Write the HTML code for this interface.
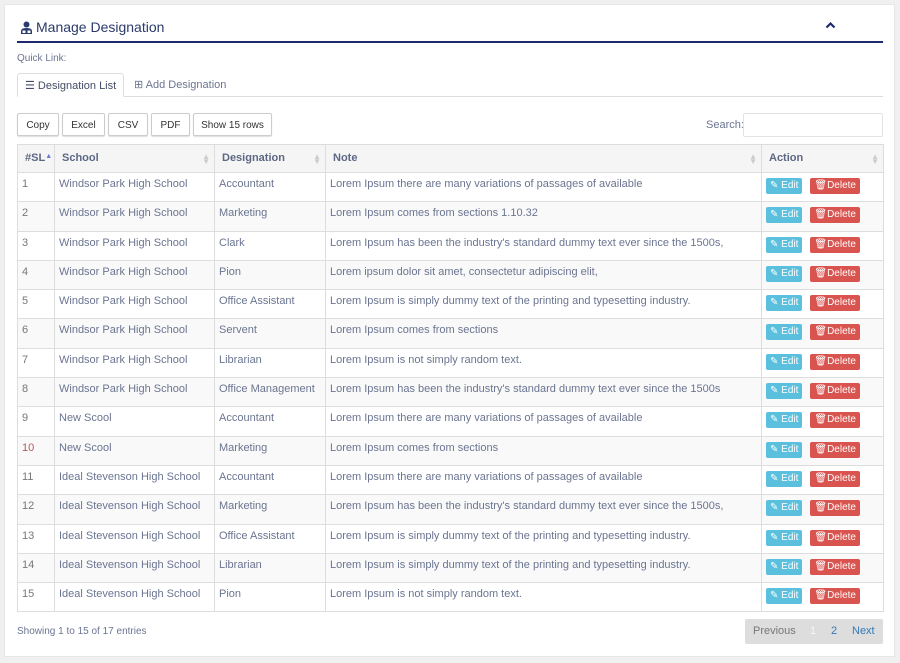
<!DOCTYPE html>
<html><head><style>
*{box-sizing:border-box;margin:0;padding:0}
body{width:900px;height:663px;background:#f0f0f0;font-family:"Liberation Sans",sans-serif;font-size:11px;color:#6b7591;position:relative;overflow:hidden}
.panel{position:absolute;left:4px;top:4px;width:891px;height:653px;background:#fff;border:1px solid #e6e6e6}
.title{position:absolute;left:20px;top:19px;font-size:14px;color:#2b3a6b}
.title svg{vertical-align:-2px;margin-right:3px}
.chev{position:absolute;left:825px;top:21px}
.line{position:absolute;left:17px;top:41px;width:866px;height:2px;background:#1f2a6e}
.ql{position:absolute;left:17px;top:53px;font-size:10px}
.tabs{position:absolute;left:17px;top:73px;width:866px;height:24px;border-bottom:1px solid #ddd}
.tab{position:absolute;top:0;height:24px;line-height:24px;padding:0 7px;font-size:11px}
.tab.a{left:0;border:1px solid #ddd;border-bottom:1px solid #fff;background:#fff;border-radius:3px 3px 0 0;color:#444c66}
.btn{position:absolute;top:113px;height:23px;border:1px solid #ccc;border-radius:2px;background:#fff;font-size:10px;color:#333;text-align:center;line-height:23px;box-shadow:0 1px 1px #ddd}
.search{position:absolute;left:706px;top:119px;font-size:11px}
.sbox{position:absolute;left:743px;top:113px;width:140px;height:24px;border:1px solid #e3e3e3;border-radius:2px}
table{position:absolute;left:17px;top:144px;width:866px;border-collapse:collapse;table-layout:fixed}
td,th{border:1px solid #ddd;text-align:left;vertical-align:top;padding:5px 4px 0 4px;height:29.3px;font-weight:normal}
td:first-child{color:#777}
th{height:28px;font-weight:bold;background:#f5f5f5;color:#5e6885;padding:7px 7px 0;position:relative}
tr:nth-child(odd) td{background:#f9f9f9}
tr:nth-child(even) td{background:#fff}
.s{position:absolute;right:4px;top:9px;color:#ccc;font-size:8px;line-height:5px}
.e,.d{display:inline-block;height:16px;line-height:16px;color:#fff;border-radius:2px;font-size:10px;padding:0 4px;margin-top:0}
.e{background:#5bc0de}.d{background:#d9534f;margin-left:8px}
.info{position:absolute;left:17px;top:626px;font-size:10px}
.pag{position:absolute;left:745px;top:619px;width:138px;height:25px;background:#ddd;border-radius:2px;font-size:11px;line-height:25px}
.pag span{position:absolute}
</style></head><body>
<div class="panel"></div>
<div class="title"><svg width="13" height="13" viewBox="0 0 13 13"><circle cx="6.5" cy="3.5" r="3" fill="#2b3a6b"/><path d="M1 13V10Q1 7 6.5 7Q12 7 12 10V13Z" fill="#2b3a6b"/><rect x="2.5" y="9.5" width="3" height="2.5" fill="#fff"/><rect x="7.5" y="9.5" width="3" height="2.5" fill="#fff"/></svg>Manage Designation</div>
<svg class="chev" width="11" height="8" viewBox="0 0 11 8"><path d="M1.5 6.5L5.5 2.5L9.5 6.5" stroke="#1f2a6e" stroke-width="2.2" fill="none"/></svg>
<div class="line"></div>
<div class="ql">Quick Link:</div>
<div class="tabs"><div class="tab a">&#9776; Designation List</div><div class="tab" style="left:110px">&#8862; Add Designation</div></div>
<div class="btn" style="left:17px;width:42px">Copy</div>
<div class="btn" style="left:62px;width:43px">Excel</div>
<div class="btn" style="left:108px;width:40px">CSV</div>
<div class="btn" style="left:151px;width:39px">PDF</div>
<div class="btn" style="left:193px;width:79px">Show 15 rows</div>
<div class="search">Search:</div><div class="sbox"></div>
<table>
<colgroup><col style="width:37px"><col style="width:160px"><col style="width:111px"><col style="width:436px"><col style="width:122px"></colgroup>
<tr><th>#SL<span style="font-size:7px;color:#6b7ad0;vertical-align:3px">&#9650;</span></th><th>School<span class="s">&#9650;<br>&#9660;</span></th><th>Designation<span class="s">&#9650;<br>&#9660;</span></th><th>Note<span class="s">&#9650;<br>&#9660;</span></th><th>Action<span class="s">&#9650;<br>&#9660;</span></th></tr>
<tr><td>1</td><td>Windsor Park High School</td><td>Accountant</td><td>Lorem Ipsum there are many variations of passages of available</td><td><span class="e">&#9998; Edit</span><span class="d">&#128465;Delete</span></td></tr>
<tr><td>2</td><td>Windsor Park High School</td><td>Marketing</td><td>Lorem Ipsum comes from sections 1.10.32</td><td><span class="e">&#9998; Edit</span><span class="d">&#128465;Delete</span></td></tr>
<tr><td>3</td><td>Windsor Park High School</td><td>Clark</td><td>Lorem Ipsum has been the industry's standard dummy text ever since the 1500s,</td><td><span class="e">&#9998; Edit</span><span class="d">&#128465;Delete</span></td></tr>
<tr><td>4</td><td>Windsor Park High School</td><td>Pion</td><td>Lorem ipsum dolor sit amet, consectetur adipiscing elit,</td><td><span class="e">&#9998; Edit</span><span class="d">&#128465;Delete</span></td></tr>
<tr><td>5</td><td>Windsor Park High School</td><td>Office Assistant</td><td>Lorem Ipsum is simply dummy text of the printing and typesetting industry.</td><td><span class="e">&#9998; Edit</span><span class="d">&#128465;Delete</span></td></tr>
<tr><td>6</td><td>Windsor Park High School</td><td>Servent</td><td>Lorem Ipsum comes from sections</td><td><span class="e">&#9998; Edit</span><span class="d">&#128465;Delete</span></td></tr>
<tr><td>7</td><td>Windsor Park High School</td><td>Librarian</td><td>Lorem Ipsum is not simply random text.</td><td><span class="e">&#9998; Edit</span><span class="d">&#128465;Delete</span></td></tr>
<tr><td>8</td><td>Windsor Park High School</td><td>Office Management</td><td>Lorem Ipsum has been the industry's standard dummy text ever since the 1500s</td><td><span class="e">&#9998; Edit</span><span class="d">&#128465;Delete</span></td></tr>
<tr><td>9</td><td>New Scool</td><td>Accountant</td><td>Lorem Ipsum there are many variations of passages of available</td><td><span class="e">&#9998; Edit</span><span class="d">&#128465;Delete</span></td></tr>
<tr><td style="color:#b5585a">10</td><td>New Scool</td><td>Marketing</td><td>Lorem Ipsum comes from sections</td><td><span class="e">&#9998; Edit</span><span class="d">&#128465;Delete</span></td></tr>
<tr><td>11</td><td>Ideal Stevenson High School</td><td>Accountant</td><td>Lorem Ipsum there are many variations of passages of available</td><td><span class="e">&#9998; Edit</span><span class="d">&#128465;Delete</span></td></tr>
<tr><td>12</td><td>Ideal Stevenson High School</td><td>Marketing</td><td>Lorem Ipsum has been the industry's standard dummy text ever since the 1500s,</td><td><span class="e">&#9998; Edit</span><span class="d">&#128465;Delete</span></td></tr>
<tr><td>13</td><td>Ideal Stevenson High School</td><td>Office Assistant</td><td>Lorem Ipsum is simply dummy text of the printing and typesetting industry.</td><td><span class="e">&#9998; Edit</span><span class="d">&#128465;Delete</span></td></tr>
<tr><td>14</td><td>Ideal Stevenson High School</td><td>Librarian</td><td>Lorem Ipsum is simply dummy text of the printing and typesetting industry.</td><td><span class="e">&#9998; Edit</span><span class="d">&#128465;Delete</span></td></tr>
<tr><td>15</td><td>Ideal Stevenson High School</td><td>Pion</td><td>Lorem Ipsum is not simply random text.</td><td><span class="e">&#9998; Edit</span><span class="d">&#128465;Delete</span></td></tr>
</table>
<div class="info">Showing 1 to 15 of 17 entries</div>
<div class="pag"><span style="left:8px;color:#777">Previous</span><span style="left:65px;color:#f5f5f5">1</span><span style="left:86px;color:#337ab7">2</span><span style="left:107px;color:#337ab7">Next</span></div>
</body></html>
